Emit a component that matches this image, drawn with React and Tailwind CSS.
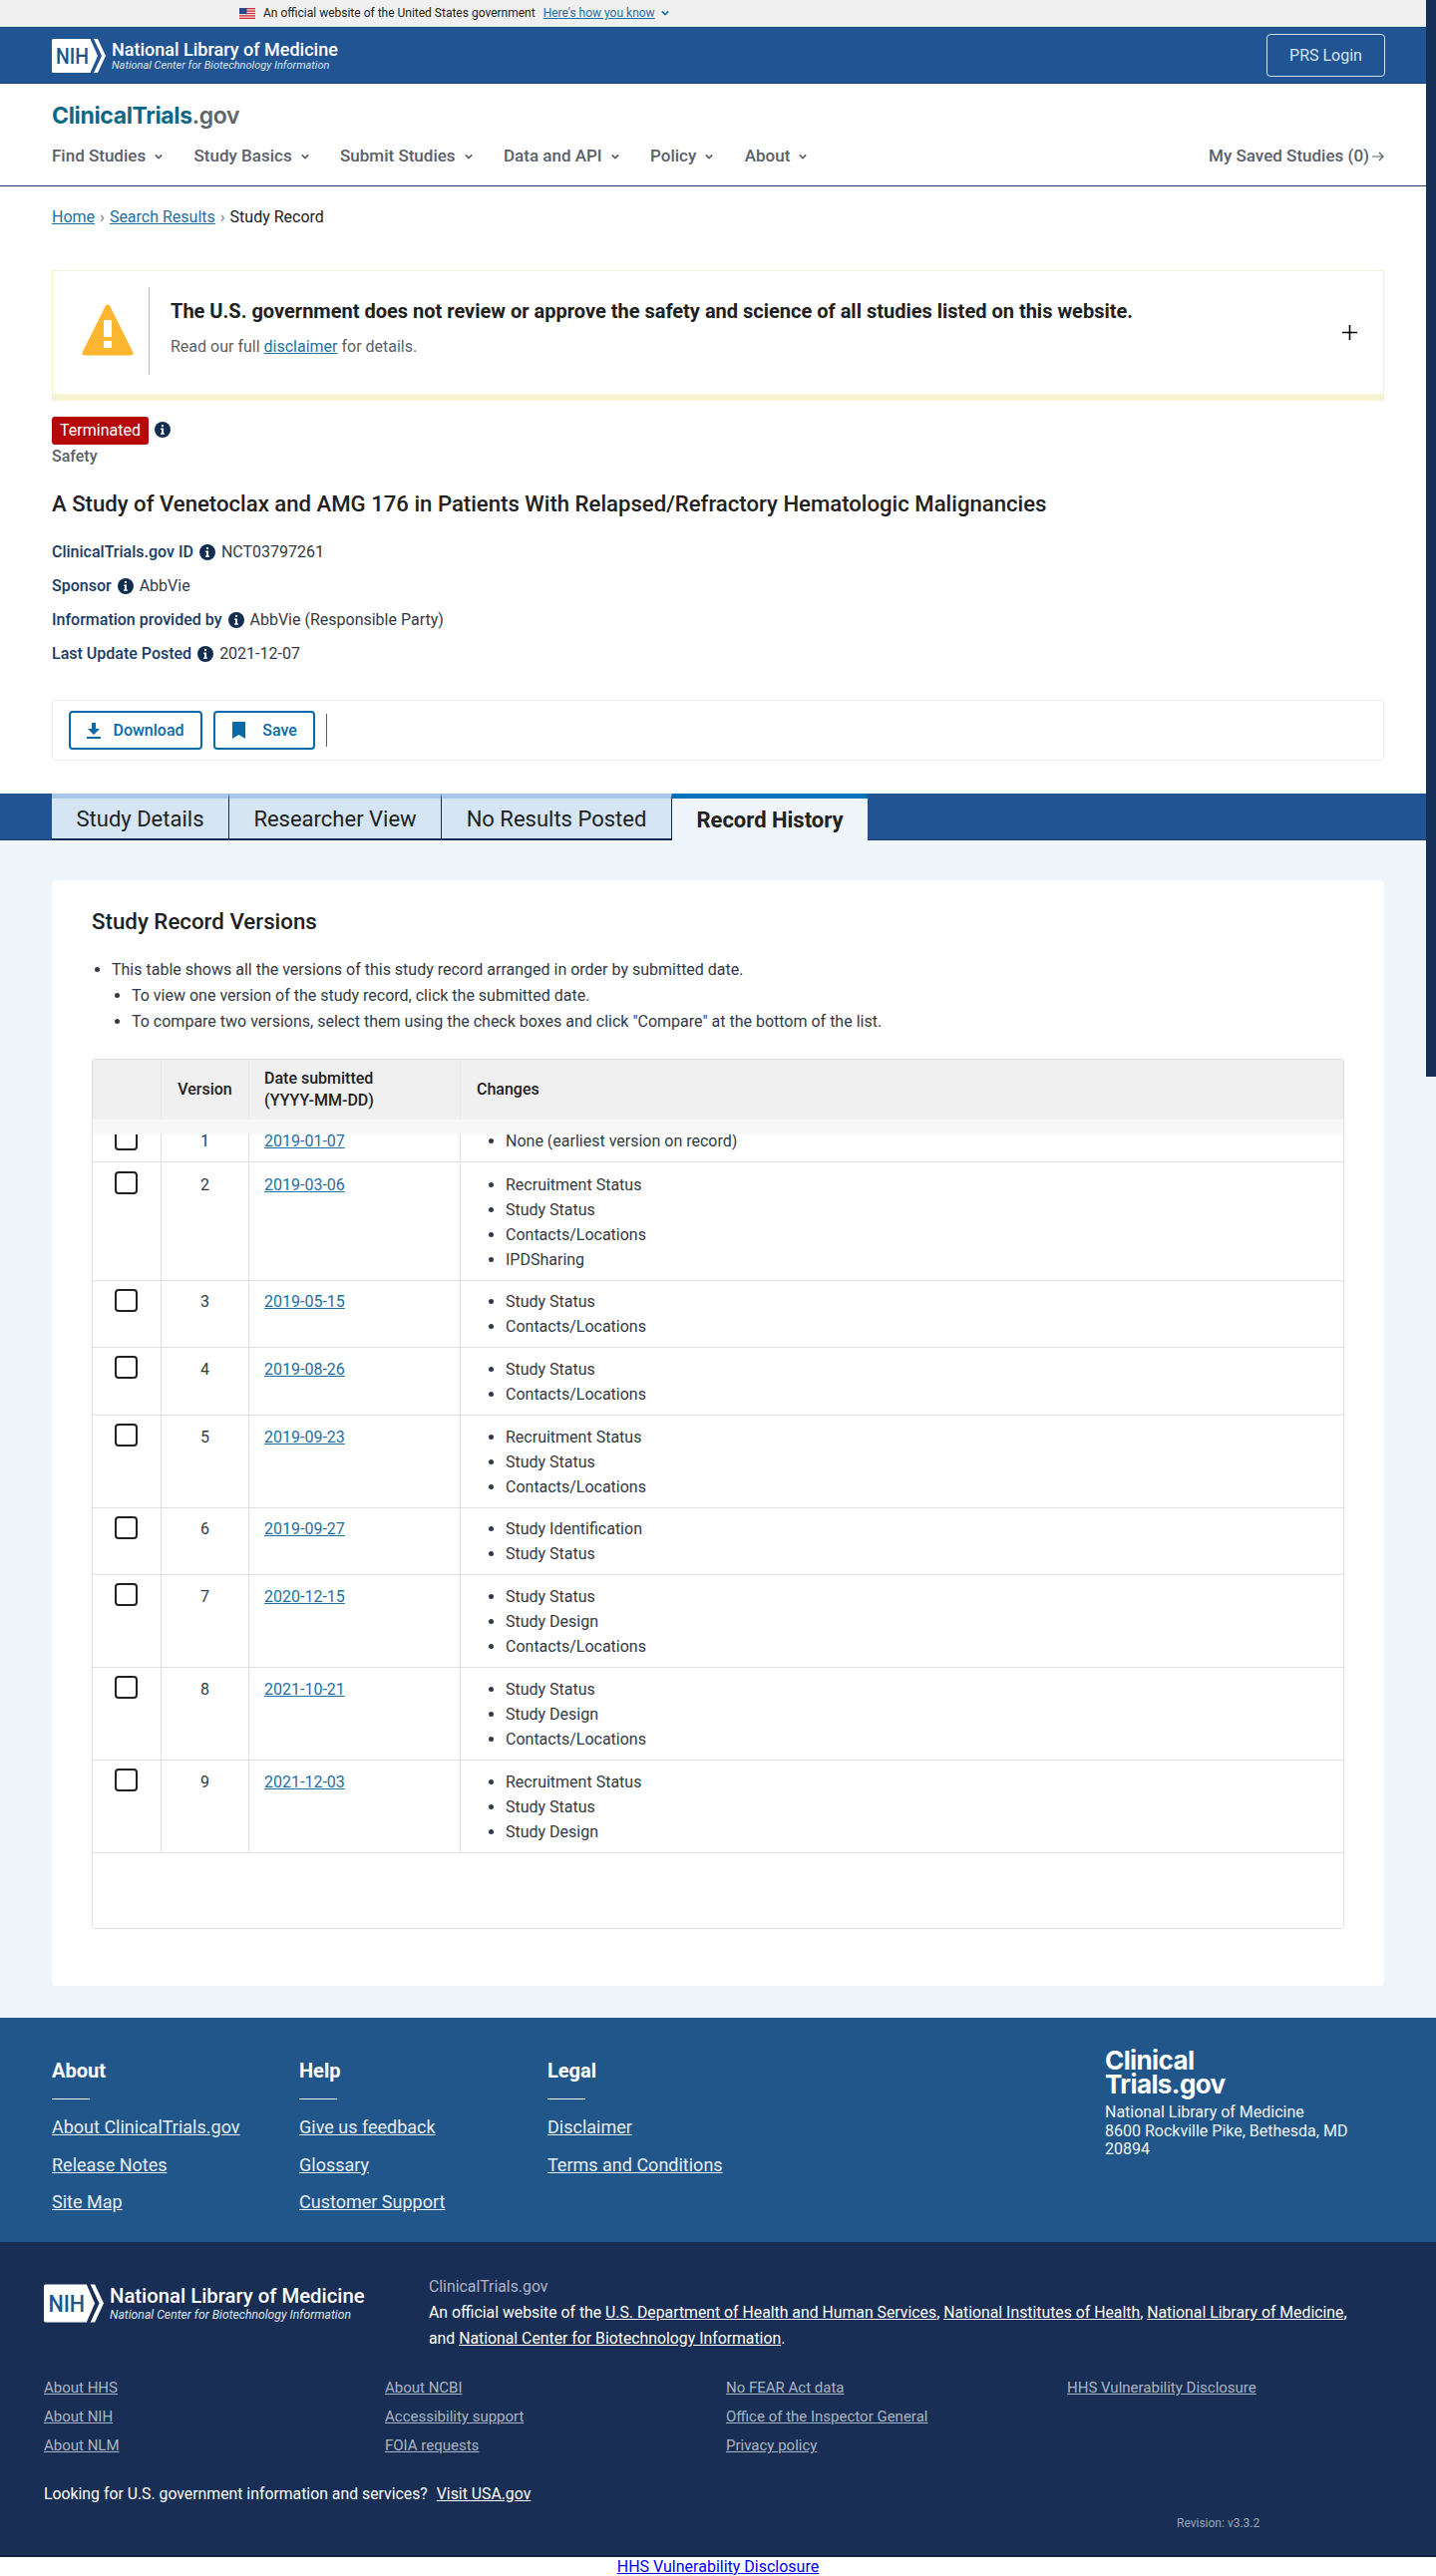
import React from "react";

function NihMark({ className }) {
  return (
    <svg viewBox="0 0 54 34" className={className}>
      <path d="M1.5 0H38.5L46 17L38.5 34H1.5Q0 34 0 32.5V1.5Q0 0 1.5 0Z" fill="#fff" />
      <path d="M42 0H46L54 17L46 34H42L50 17Z" fill="#fff" />
      <text x="4" y="25" fontFamily="Roboto, sans-serif" fontSize="22" fontWeight="500" fill="#20558a" textLength="33" lengthAdjust="spacingAndGlyphs">NIH</text>
    </svg>
  );
}

function Info({ className = "" }) {
  return (
    <svg viewBox="0 0 16 16" className={"w-[16px] h-[16px] shrink-0 " + className}>
      <circle cx="8" cy="8" r="8" fill="#112e51" />
      <rect x="7" y="3" width="2" height="2" fill="#fff" />
      <path d="M6.2 6.6H9V11.5H10V12.8H6V11.5H7V7.9H6.2Z" fill="#fff" />
    </svg>
  );
}

function Chevron({ className = "" }) {
  return (
    <svg viewBox="0 0 10 10" className={"w-[8px] h-[8px] shrink-0 " + className} fill="none" stroke="currentColor" strokeWidth="2.2">
      <path d="M1 3L5 7L9 3" />
    </svg>
  );
}

function Flag() {
  return (
    <svg viewBox="0 0 16 11" className="w-[16px] h-[11px]">
      <rect width="16" height="11" fill="#fff" />
      <rect y="0" width="16" height="1.4" fill="#c8313e" />
      <rect y="2.4" width="16" height="1.4" fill="#c8313e" />
      <rect y="4.8" width="16" height="1.4" fill="#c8313e" />
      <rect y="7.2" width="16" height="1.4" fill="#c8313e" />
      <rect y="9.6" width="16" height="1.4" fill="#c8313e" />
      <rect width="7.5" height="6" fill="#2a4a8a" />
    </svg>
  );
}

function Check() {
  return <span className="block w-[23px] h-[23px] border-2 border-[#212121] rounded-[4px] bg-white" />;
}

function Row({ v, d, items }) {
  return (
    <div className="flex border-b border-[#e0e0e0]">
      <div className="w-[69px] shrink-0 border-r border-[#e0e0e0] pl-[22px] pt-[8px]">
        <Check />
      </div>
      <div className="w-[88px] shrink-0 border-r border-[#e0e0e0] text-center pt-[8.7px] text-[16px] leading-[25px] text-[#323a45]">{v}</div>
      <div className="w-[212px] shrink-0 border-r border-[#e0e0e0] pl-[15px] pt-[8.7px] text-[16px] leading-[25px]">
        <a className="underline text-[#1d6fa5]">{d}</a>
      </div>
      <ul className="list-disc pl-[45px] pt-[8.7px] pb-[8px] text-[16px] leading-[25px] text-[#323a45]">
        {items.map((t) => (
          <li key={t}>{t}</li>
        ))}
      </ul>
    </div>
  );
}

const rows = [
  [2, "2019-03-06", ["Recruitment Status", "Study Status", "Contacts/Locations", "IPDSharing"]],
  [3, "2019-05-15", ["Study Status", "Contacts/Locations"]],
  [4, "2019-08-26", ["Study Status", "Contacts/Locations"]],
  [5, "2019-09-23", ["Recruitment Status", "Study Status", "Contacts/Locations"]],
  [6, "2019-09-27", ["Study Identification", "Study Status"]],
  [7, "2020-12-15", ["Study Status", "Study Design", "Contacts/Locations"]],
  [8, "2021-10-21", ["Study Status", "Study Design", "Contacts/Locations"]],
  [9, "2021-12-03", ["Recruitment Status", "Study Status", "Study Design"]],
];

const navItems = ["Find Studies", "Study Basics", "Submit Studies", "Data and API", "Policy", "About"];

function Meta({ label, value }) {
  return (
    <div className="flex items-center h-[34px] text-[16px]">
      <span className="font-medium text-[#1b3a66]">{label}</span>
      <Info className="ml-[6px] mr-[6px]" />
      <span className="text-[#323a45]">{value}</span>
    </div>
  );
}

function Tab({ children, active, w }) {
  return active ? (
    <div className={"flex items-center justify-center bg-[#eff5fb] border-t-[5px] border-[#0071bc] text-[22px] font-bold text-[#212121] h-[48px] -mb-px pb-[1px] " + w}>
      {children}
    </div>
  ) : (
    <div className={"flex items-center justify-center bg-[#d6e5f4] border-t-[5px] border-t-[#a8c6e6] border-b-2 border-b-[#112e51] border-r border-r-[#112e51] text-[22px] text-[#212121] h-[47px] pt-[1px] " + w}>
      {children}
    </div>
  );
}

function FootCol({ title, links, className }) {
  return (
    <div className={className}>
      <div className="text-[20px] font-bold text-white leading-[24px]">{title}</div>
      <div className="w-[38px] h-px bg-white mt-[16px] mb-[18px]" />
      <div className="flex flex-col gap-[17px]">
        {links.map((l) => (
          <a key={l} className="underline text-[18px] leading-[20.5px] text-[#e6eef7]">{l}</a>
        ))}
      </div>
    </div>
  );
}

function LinkCol({ links, className }) {
  return (
    <div className={"flex flex-col gap-[11px] " + className}>
      {links.map((l) => (
        <a key={l} className="underline text-[15px] leading-[18px] text-[#a9b5c4]">{l}</a>
      ))}
    </div>
  );
}

export default function App() {
  return (
    <div className="relative w-[1440px] h-[2584px] overflow-hidden bg-white font-['Roboto',sans-serif] text-[#212121]">
      {/* dark strip over the right edge */}
      <div className="absolute right-0 top-0 w-[10px] h-[1080px] bg-[#162f56] z-10" />

      {/* gov banner */}
      <div className="h-[27px] bg-[#f0f0f0] border-b border-[#d5e4f2] flex items-center pl-[240px] text-[12px] text-[#212121]">
        <Flag />
        <span className="ml-[8px]">An official website of the United States government</span>
        <a className="ml-[8px] underline text-[#1d6fa5]">Here's how you know</a>
        <Chevron className="ml-[6px] text-[#1d6fa5]" />
      </div>

      {/* NLM bar */}
      <div className="h-[57px] bg-[#205493] border-y border-[#1a4478] flex items-center justify-between pl-[52px] pr-[51px]">
        <div className="flex items-center">
          <NihMark className="w-[54px] h-[34px]" />
          <div className="ml-[6px] text-white">
            <div className="text-[18px] leading-[20px] font-medium">National Library of Medicine</div>
            <div className="text-[11px] leading-[12px] italic text-[#dbe6f2]">National Center for Biotechnology Information</div>
          </div>
        </div>
        <a className="w-[119px] h-[43px] flex items-center justify-center border border-[#cfe0f2] rounded-[4px] text-[16px] text-[#d6e6f7]">PRS Login</a>
      </div>

      {/* site header */}
      <div className="h-[103px] border-b border-[#1f3d66] pl-[52px] pr-[52px]">
        <div className="pt-[18px] h-[52px] font-['Inter',sans-serif] text-[23px] leading-[28px] font-bold tracking-[-0.35px] text-[#0b6887]">
          ClinicalTrials<span className="font-semibold text-[#5f6468]">.gov</span>
        </div>
        <div className="flex items-center justify-between h-[42px] text-[#5b616b]">
          <div className="flex gap-[31.4px]">
            {navItems.map((n) => (
              <div key={n} className="flex items-center">
                <span className="text-[17px] font-medium">{n}</span>
                <Chevron className="ml-[9px]" />
              </div>
            ))}
          </div>
          <div className="flex items-center text-[17px] font-medium">
            My Saved Studies (0)
            <svg viewBox="0 0 12 12" className="w-[12px] h-[12px] ml-[3px]" fill="none" stroke="currentColor" strokeWidth="1.2">
              <path d="M0 6H11M7 2L11 6L7 10" />
            </svg>
          </div>
        </div>
      </div>

      {/* breadcrumb */}
      <div className="h-[84px] pl-[52px] pt-[21px] flex items-start text-[16px] leading-[20px]">
        <a className="underline text-[#1d6fa5]">Home</a>
        <span className="mx-[5px] text-[#71767a]">›</span>
        <a className="underline text-[#1d6fa5]">Search Results</a>
        <span className="mx-[5px] text-[#71767a]">›</span>
        <span>Study Record</span>
      </div>

      {/* alert */}
      <div className="mx-[52px] h-[131px] border border-[#f6f2d2] border-b-[7px] border-b-[#f8f3d2] flex pt-[16px] relative">
        <div className="w-[97px] shrink-0 pl-[29px] pt-[17px] h-[88px] border-r border-[#e9b949]">
          <svg viewBox="0 0 52 52" className="w-[52px] h-[52px]">
            <path d="M26 3L49 49H3Z" fill="#fdb62f" stroke="#fdb62f" strokeWidth="5" strokeLinejoin="round" />
            <rect x="22" y="16" width="8" height="17" fill="#fff" />
            <rect x="22" y="37" width="8" height="7" fill="#fff" />
          </svg>
        </div>
        <div className="pl-[21px]">
          <div className="text-[20px] font-bold leading-[28px] text-[#212121] mt-[10px]">The U.S. government does not review or approve the safety and science of all studies listed on this website.</div>
          <div className="text-[16px] leading-[20px] text-[#5b616b] mt-[12px]">
            Read our full <a className="underline text-[#1d6fa5]">disclaimer</a> for details.
          </div>
        </div>
        <svg viewBox="0 0 15 15" className="absolute right-[26px] top-[54px] w-[15px] h-[15px]" fill="none" stroke="#000" strokeWidth="1.6">
          <path d="M7.5 0V15M0 7.5H15" />
        </svg>
      </div>

      {/* record summary */}
      <div className="pl-[52px]">
        <div className="flex items-start mt-[16px]">
          <span className="h-[28px] w-[97px] flex items-center justify-center rounded-[3px] bg-[#b50909] text-white text-[16px]">Terminated</span>
          <Info className="ml-[6px] mt-[5px]" />
        </div>
        <div className="text-[16px] font-medium text-[#5b616b] leading-[20px] mt-[2px]">Safety</div>
        <div className="text-[22.15px] font-medium leading-[28px] text-[#212121] mt-[23px]">A Study of Venetoclax and AMG 176 in Patients With Relapsed/Refractory Hematologic Malignancies</div>
        <div className="mt-[18px]">
          <Meta label="ClinicalTrials.gov ID" value="NCT03797261" />
          <Meta label="Sponsor" value="AbbVie" />
          <Meta label="Information provided by" value="AbbVie (Responsible Party)" />
          <Meta label="Last Update Posted" value="2021-12-07" />
        </div>
      </div>

      {/* actions */}
      <div className="mx-[52px] mt-[29px] h-[61px] border border-[#ececec] rounded-[2px] flex items-center pl-[16px] gap-[11px]">
        <a className="w-[134px] h-[39px] flex items-center justify-center border-2 border-[#0a6aa8] rounded-[4px] text-[#0a6aa8] text-[16px] font-medium">
          <svg viewBox="0 0 14 16" className="w-[14px] h-[16px] mr-[12px]" fill="#0a6aa8">
            <path d="M5 0H9V6H13L7 12L1 6H5ZM0 14H14V16H0Z" />
          </svg>
          Download
        </a>
        <a className="w-[102px] h-[39px] flex items-center justify-center border-2 border-[#0a6aa8] rounded-[4px] text-[#0a6aa8] text-[16px] font-medium">
          <svg viewBox="0 0 15 17" className="w-[15px] h-[17px] mr-[16px]" fill="#0a6aa8">
            <path d="M1 0H14V17L7.5 13L1 17Z" />
          </svg>
          Save
        </a>
        <div className="w-px h-[33px] bg-[#5b616b]" />
      </div>

      {/* tabs */}
      <div className="mt-[33px] h-[47px] bg-[#205493] border-b border-[#1a4478] flex pl-[52px]">
        <Tab w="w-[178px]">Study Details</Tab>
        <Tab w="w-[213px]">Researcher View</Tab>
        <Tab w="w-[231px]">No Results Posted</Tab>
        <Tab active w="w-[196px]">Record History</Tab>
      </div>

      {/* body */}
      <div className="h-[1181px] bg-[#eef5fb] px-[52px] pt-[40px]">
        <div className="h-[1109px] bg-white rounded-[3px] px-[40px] pt-[27px]">
          <div className="text-[22.3px] font-medium leading-[28px] text-[#212121]">Study Record Versions</div>
          <ul className="list-disc pl-[20px] mt-[22px] text-[16px] leading-[26px] text-[#323a45]">
            <li>
              This table shows all the versions of this study record arranged in order by submitted date.
              <ul className="list-disc pl-[20px]">
                <li>To view one version of the study record, click the submitted date.</li>
                <li>To compare two versions, select them using the check boxes and click "Compare" at the bottom of the list.</li>
              </ul>
            </li>
          </ul>
          <div className="mt-[24px] h-[873px] border border-[#e0e0e0] rounded-[2px] overflow-hidden">
            {/* header */}
            <div className="flex h-[60px] bg-[#f0f0f0] text-[16px] font-medium text-[#212121] leading-[22px]">
              <div className="w-[69px] shrink-0 border-r border-[#e8e8e8]" />
              <div className="w-[88px] shrink-0 border-r border-[#e8e8e8] flex items-center justify-center">Version</div>
              <div className="w-[212px] shrink-0 border-r border-[#e8e8e8] flex flex-col justify-center pl-[15px]">
                <span>Date submitted</span>
                <span>(YYYY-MM-DD)</span>
              </div>
              <div className="flex items-center pl-[16px]">Changes</div>
            </div>
            <div className="h-[15px] bg-[#f7f7f7]" />
            {/* first row, partly under the header */}
            <div className="h-[29px] overflow-hidden">
              <div className="-mt-[15px]">
                <Row v={1} d="2019-01-07" items={["None (earliest version on record)"]} />
              </div>
            </div>
            {rows.map(([v, d, items]) => (
              <Row key={v} v={v} d={d} items={items} />
            ))}
          </div>
        </div>
      </div>

      {/* footer blue */}
      <div className="h-[225px] bg-[#21568a] flex pl-[52px] pt-[41px] relative">
        <FootCol className="w-[248px]" title="About" links={["About ClinicalTrials.gov", "Release Notes", "Site Map"]} />
        <FootCol className="w-[249px]" title="Help" links={["Give us feedback", "Glossary", "Customer Support"]} />
        <FootCol className="w-[300px]" title="Legal" links={["Disclaimer", "Terms and Conditions"]} />
        <div className="ml-[259px] -mt-[10px] w-[260px]">
          <div className="font-['Inter',sans-serif] text-[26px] leading-[24px] font-bold tracking-[-0.6px] text-white">
            <div>Clinical</div>
            <div>Trials.gov</div>
          </div>
          <div className="text-[16px] leading-[18.5px] text-[#f0f5fa] mt-[7px]">
            National Library of Medicine
            <br />
            8600 Rockville Pike, Bethesda, MD
            <br />
            20894
          </div>
        </div>
      </div>

      {/* footer navy */}
      <div className="h-[316px] bg-[#182e54] border-b-2 border-[#0f2140] pl-[44px]">
        <div className="flex pt-[32px] h-[137px]">
          <div className="w-[386px] shrink-0 flex items-start pt-[10px]">
            <NihMark className="w-[60px] h-[39px]" />
            <div className="ml-[6px] text-white">
              <div className="text-[20.3px] leading-[24px] font-medium">National Library of Medicine</div>
              <div className="text-[12.2px] leading-[14px] italic text-[#dbe6f2]">National Center for Biotechnology Information</div>
            </div>
          </div>
          <div className="text-[15.8px] leading-[26px] text-white">
            <div className="text-[#a9b5c4]">ClinicalTrials.gov</div>
            <div>
              An official website of the <a className="underline">U.S. Department of Health and Human Services</a>, <a className="underline">National Institutes of Health</a>, <a className="underline">National Library of Medicine</a>,
            </div>
            <div>
              and <a className="underline">National Center for Biotechnology Information</a>.
            </div>
          </div>
        </div>
        <div className="flex">
          <LinkCol className="w-[342px]" links={["About HHS", "About NIH", "About NLM"]} />
          <LinkCol className="w-[342px]" links={["About NCBI", "Accessibility support", "FOIA requests"]} />
          <LinkCol className="w-[342px]" links={["No FEAR Act data", "Office of the Inspector General", "Privacy policy"]} />
          <LinkCol links={["HHS Vulnerability Disclosure"]} />
        </div>
        <div className="mt-[29px] text-[15.8px] leading-[22px] text-white">
          Looking for U.S. government information and services?
          <a className="underline ml-[9px]">Visit USA.gov</a>
        </div>
        <div className="mt-[10px] pl-[1136px] text-[12px] leading-[16px] text-[#9aa7b8]">Revision: v3.3.2</div>
      </div>

      {/* bottom link */}
      <div className="h-[20px] flex items-center justify-center">
        <a className="underline text-[16px] text-[#0000ee]">HHS Vulnerability Disclosure</a>
      </div>
    </div>
  );
}
